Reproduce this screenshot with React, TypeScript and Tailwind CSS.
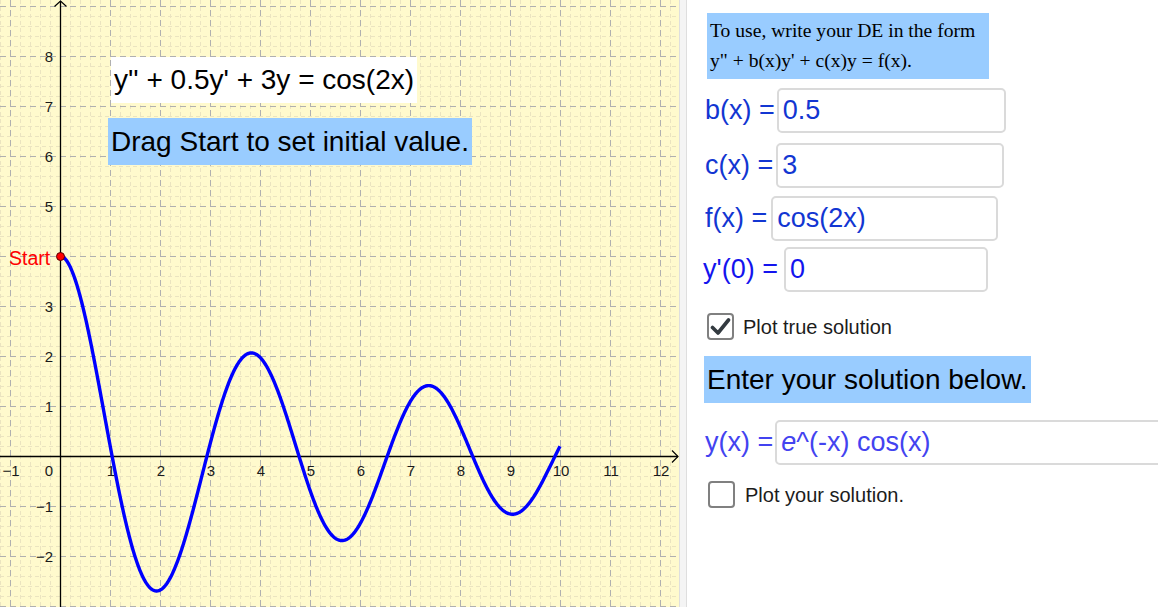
import React from "react";

const ox = 60; // pixel x of origin
const oy = 456; // pixel y of origin
const unit = 50;
const graph_w = 679;
const graph_h = 607;

// y'' + 0.5y' + 3y = cos(2x), y(0)=4, y'(0)=0
const w = Math.sqrt(3 - 0.0625);
const c1 = 4.5;
const c2 = 0.125 / w;
const solve = (x: number) =>
  Math.exp(-0.25 * x) * (c1 * Math.cos(w * x) + c2 * Math.sin(w * x)) - 0.5 * Math.cos(2 * x) + 0.5 * Math.sin(2 * x);

const curve = (() => {
  const pts: string[] = [];
  for (let i = 0; i <= 1000; i++) {
    const x = (i / 1000) * 10;
    pts.push(`${(ox + x * unit).toFixed(2)},${(oy - solve(x) * unit).toFixed(2)}`);
  }
  return pts.join(" ");
})();

const Graph = () => {
  const minor_x: number[] = [];
  for (let x = 0; x <= graph_w; x += 10) if ((x - ox) % unit !== 0) minor_x.push(x);
  const minor_y: number[] = [];
  for (let y = 6; y <= graph_h; y += 10) if ((y - oy) % unit !== 0) minor_y.push(y);
  const major_x: number[] = [];
  for (let k = -1; k <= 12; k++) major_x.push(ox + k * unit);
  const major_y: number[] = [];
  for (let k = -3; k <= 9; k++) major_y.push(oy - k * unit);

  const xlabels = [-1, 1, 2, 3, 4, 5, 6, 7, 8, 9, 10, 11, 12];
  const ylabels = [-2, -1, 1, 2, 3, 5, 6, 7, 8];

  return (
    <svg width={graph_w} height={graph_h} className="block">
      <rect width={graph_w} height={graph_h} fill="#fffacd" />
      {minor_x.map((x) => (
        <line key={"mx" + x} x1={x + 0.5} y1={0} x2={x + 0.5} y2={graph_h} stroke="#ebe4c0" strokeDasharray="4 3" />
      ))}
      {minor_y.map((y) => (
        <line key={"my" + y} x1={0} y1={y + 0.5} x2={graph_w} y2={y + 0.5} stroke="#ebe4c0" strokeDasharray="4 3" />
      ))}
      {major_x.map((x) => (
        <line key={"Mx" + x} x1={x + 0.5} y1={0} x2={x + 0.5} y2={graph_h} stroke="#b0b0b0" strokeDasharray="6 4" />
      ))}
      {major_y.map((y) => (
        <line key={"My" + y} x1={0} y1={y + 0.5} x2={graph_w} y2={y + 0.5} stroke="#b0b0b0" strokeDasharray="6 4" />
      ))}

      {/* axes */}
      <line x1={ox + 0.5} y1={1} x2={ox + 0.5} y2={graph_h} stroke="#000" strokeWidth={1.3} />
      <line x1={0} y1={oy + 0.5} x2={graph_w - 1} y2={oy + 0.5} stroke="#000" strokeWidth={1.3} />
      <polyline points={`${ox - 5.5},6.5 ${ox + 0.5},1 ${ox + 6.5},6.5`} fill="none" stroke="#000" strokeWidth={1.2} />
      <polyline
        points={`${graph_w - 7},${oy - 5.5} ${graph_w - 1},${oy + 0.5} ${graph_w - 7},${oy + 6.5}`}
        fill="none"
        stroke="#000"
        strokeWidth={1.2}
      />

      <g fontFamily="'Liberation Sans', Arial, sans-serif" fontSize={15} fill="#1a1a1a">
        {xlabels.map((v) => (
          <text key={"xl" + v} x={ox + v * unit + 1} y={476} textAnchor="middle">
            {v < 0 ? "\u2212" + -v : v}
          </text>
        ))}
        <text x={49} y={476} textAnchor="middle">
          0
        </text>
        {ylabels.map((v) => (
          <text key={"yl" + v} x={53} y={oy - v * unit + 6} textAnchor="end">
            {v < 0 ? "\u2212" + -v : v}
          </text>
        ))}
      </g>

      <polyline points={curve} fill="none" stroke="#0000ff" strokeWidth={3.4} strokeLinejoin="round" />

      <circle cx={ox + 0.5} cy={oy - 4 * unit + 0.5} r={4} fill="#ff0000" stroke="#5a0000" strokeWidth={1} />
      <text x={9} y={265} fontFamily="'Liberation Sans', Arial, sans-serif" fontSize={19.5} fill="#ff0000">
        Start
      </text>
    </svg>
  );
};

const Field = ($: { label: string; value: React.ReactNode; gap: string; width: string; color: string; top: string }) => (
  <div className={"flex items-center " + $.top}>
    <div className="text-[27px] leading-none whitespace-nowrap" style={{ color: $.color }}>
      {$.label}
    </div>
    <div
      className={"h-[45px] shrink-0 flex items-center pl-[4px] border-2 border-[#dadada] rounded-[5px] bg-white text-[27px] leading-none " + $.gap + " " + $.width}
      style={{ color: $.color }}
    >
      {$.value}
    </div>
  </div>
);

const CheckBox = ($: { checked: boolean }) => (
  <div className="w-[27px] h-[27px] shrink-0 rounded-[4px] border-2 border-[#808080] bg-white flex items-center justify-center">
    {$.checked && (
      <svg width="21" height="19" viewBox="0 0 21 19">
        <path d="M2.5 10.5 L8 16 L18.5 3" fill="none" stroke="#333a40" strokeWidth="3.6" strokeLinecap="round" strokeLinejoin="round" />
      </svg>
    )}
  </div>
);

export default function App() {
  return (
    <div className="w-[1158px] h-[607px] flex overflow-hidden bg-white font-['Liberation_Sans',Arial,sans-serif]">
      <div className="relative w-[679px] h-full shrink-0">
        <Graph />
        <div className="absolute left-[111px] top-[57px] w-[306px] h-[46px] bg-white flex items-center pl-[3px] text-[28px] text-black whitespace-nowrap">
          y'' + 0.5y' + 3y = cos(2x)
        </div>
        <div className="absolute left-[108px] top-[118px] w-[364px] h-[47px] bg-[#99ccff] flex items-center pl-[3px] text-[28px] text-black whitespace-nowrap">
          Drag Start to set initial value.
        </div>
      </div>

      <div className="w-[8px] h-full shrink-0 bg-[#f4f4f4] border-l border-r border-[#dedede]" />

      <div className="flex-1 h-full flex flex-col overflow-hidden">
        <div className="ml-[20px] mt-[13px] w-[282px] h-[66px] bg-[#99ccff] pl-[3px] pt-[3px] font-['Liberation_Serif','Times_New_Roman',serif] text-[19.6px] leading-[30px] text-black">
          <div>To use, write your DE in the form</div>
          <div>y" + b(x)y' + c(x)y = f(x).</div>
        </div>

        <div className="ml-[18px]">
          <Field top="mt-[9px]" label="b(x) =" value="0.5" gap="ml-[2px]" width="w-[229px]" color="#1236d2" />
          <Field top="mt-[10px]" label="c(x) =" value="3" gap="ml-[3px]" width="w-[228px]" color="#1236d2" />
          <Field top="mt-[8px]" label="f(x) =" value="cos(2x)" gap="ml-[4px]" width="w-[227px]" color="#1236d2" />
        </div>
        <div className="ml-[16px]">
          <Field top="mt-[6px]" label="y'(0) =" value="0" gap="ml-[6px]" width="w-[204px]" color="#1414ee" />
        </div>

        <div className="ml-[20px] mt-[21px] flex items-center gap-[9px]">
          <CheckBox checked />
          <span className="text-[20px] text-[#1c1c1c] leading-none">Plot true solution</span>
        </div>

        <div className="ml-[17px] mt-[16px] w-[327px] h-[47px] bg-[#99ccff] flex items-center pl-[3px] text-[28px] text-black whitespace-nowrap">
          Enter your solution below.
        </div>

        <div className="ml-[18px]">
          <Field
            top="mt-[17px]"
            label="y(x) ="
            value={
              <span>
                <span className="italic">e</span>^(-x) cos(x)
              </span>
            }
            gap="ml-[2px]"
            width="w-[400px]"
            color="#4343f0"
          />
        </div>

        <div className="ml-[21px] mt-[16px] flex items-center gap-[10px]">
          <CheckBox checked={false} />
          <span className="text-[20px] text-[#1c1c1c] leading-none">Plot your solution.</span>
        </div>
      </div>
    </div>
  );
}
